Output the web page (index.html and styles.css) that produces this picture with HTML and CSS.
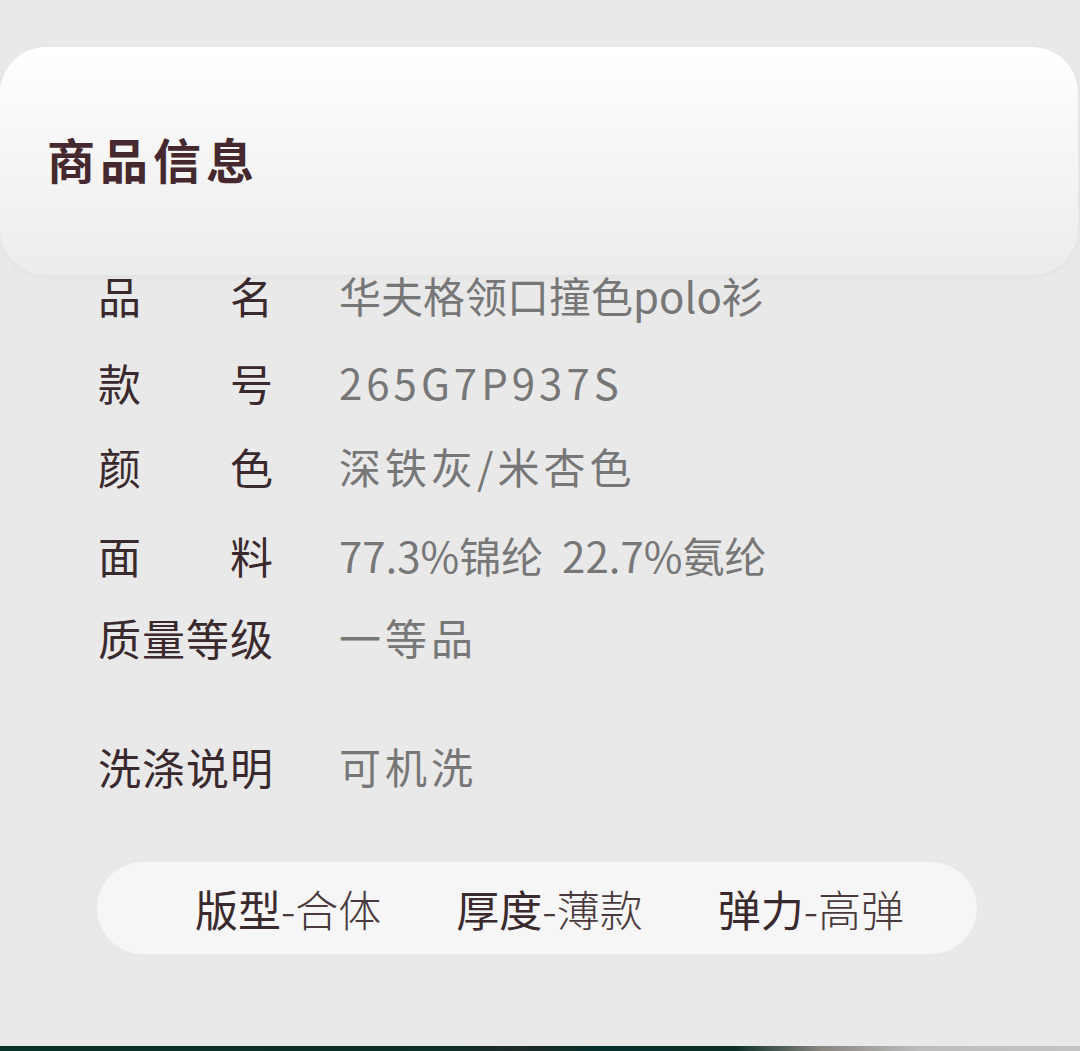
FILE: index.html
```html
<!DOCTYPE html>
<html lang="zh-CN">
  <head>
    <meta charset="UTF-8" />
    <meta name="viewport" content="width=device-width, initial-scale=1.0" />
    <title>商品信息</title>
    <link rel="stylesheet" href="styles.css">
  </head>
  <body>
    <section class="info-card">
      <h2 class="info-title">商品信息</h2>
    </section>

    <ul class="spec-list">
      <li class="spec-row row-name">
        <span class="spec-label">品名</span>
        <span class="spec-value">华夫格领口撞色polo衫</span>
      </li>
      <li class="spec-row row-code">
        <span class="spec-label">款号</span>
        <span class="spec-value spaced">265G7P937S</span>
      </li>
      <li class="spec-row row-color">
        <span class="spec-label">颜色</span>
        <span class="spec-value spaced">深铁灰/米杏色</span>
      </li>
      <li class="spec-row row-fabric">
        <span class="spec-label">面料</span>
        <span class="spec-value">77.3%锦纶&nbsp; 22.7%氨纶</span>
      </li>
      <li class="spec-row row-grade">
        <span class="spec-label">质量等级</span>
        <span class="spec-value spaced">一等品</span>
      </li>
      <li class="spec-row row-wash">
        <span class="spec-label">洗涤说明</span>
        <span class="spec-value spaced">可机洗</span>
      </li>
    </ul>

    <div class="feature-pill">
      <span class="feature"><b>版型</b>-合体</span>
      <span class="feature"><b>厚度</b>-薄款</span>
      <span class="feature"><b>弹力</b>-高弹</span>
    </div>

    <div class="bottom-strip"></div>
  </body>
</html>
```

FILE: styles.css
```css
* {
  margin: 0;
  padding: 0;
  box-sizing: border-box;
}

body {
  font-family: "Noto Sans CJK SC", "Noto Sans", sans-serif;
  background-color: #e9e9e9;
  color: #3b2a2d;
  height: 1051px;
  overflow: hidden;
  display: flex;
  flex-direction: column;
}

.info-card {
  margin-top: 47px;
  width: 1078px;
  height: 228px;
  border-radius: 46px;
  background: linear-gradient(to bottom, #ffffff 0%, #f7f7f7 40%, #ececec 100%);
  box-shadow: 0 2px 6px rgba(0, 0, 0, 0.04);
  padding-left: 47px;
  display: flex;
  align-items: center;
}

.info-title {
  font-size: 48px;
  font-weight: 700;
  letter-spacing: 5px;
  line-height: 1;
  color: #45292e;
  margin-top: -6px;
}

.spec-list {
  list-style: none;
  padding-left: 98px;
}

.spec-row {
  display: flex;
  align-items: center;
  height: 40px;
}

.row-name { margin-top: 0; }
.row-code { margin-top: 47px; }
.row-color { margin-top: 44px; }
.row-fabric { margin-top: 49px; }
.row-grade { margin-top: 42px; }
.row-wash { margin-top: 89px; }

.spec-label {
  width: 175px;
  font-size: 43px;
  font-weight: 400;
  line-height: 1;
  text-align: justify;
  text-align-last: justify;
  color: #3b2a2d;
}

.spec-value {
  margin-left: 66px;
  font-size: 42px;
  font-weight: 400;
  line-height: 1;
  color: #777777;
  white-space: nowrap;
}

.spec-value.spaced {
  letter-spacing: 4px;
}

.feature-pill {
  margin: 76px 0 0 97px;
  width: 880px;
  height: 92px;
  border-radius: 46px;
  background-color: #f6f6f6;
  display: flex;
  align-items: center;
  justify-content: space-between;
  padding: 0 73px 0 98px;
}

.feature {
  font-size: 43px;
  font-weight: 300;
  line-height: 1;
  color: #4a3a3d;
}

.feature b {
  font-weight: 400;
  color: #3b2a2d;
}

.bottom-strip {
  margin-top: auto;
  height: 5px;
  background: linear-gradient(to right, #083129 0%, #0b2f29 40%, #1e2a28 48%, #06302a 55%, #0a2f28 68%, #8a8680 76%, #bdbdbd 85%, #c4c4c4 100%);
}
```
